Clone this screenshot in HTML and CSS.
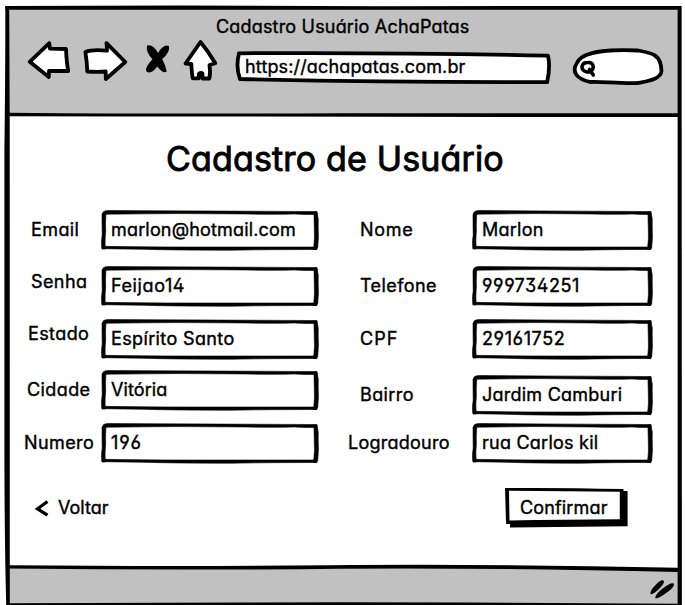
FILE: index.html
```html
<!DOCTYPE html>
<html lang="pt-BR">
<head>
<meta charset="utf-8">
<title>Cadastro Usuário AchaPatas</title>
<link rel="stylesheet" href="styles.css">
</head>
<body>
<svg class="defs" width="0" height="0" aria-hidden="true">
  <symbol id="box-wide" viewBox="0 0 218 42">
    <path d="M3 3L3 37Q110 40 214 38L215 4Q112 2 3 3Z" fill="#fff"/>
    <g class="edge">
      <path d="M2 2Q4 0 9 .5Q105 1 210 1.500L216 1.500L216 4.500Q207 4.700 193 4Q175 4.600 145 4Q75 3 2 4.300Z"/>
      <path d="M1 4Q3 .8 5 3Q4.300 13 4.700 21Q3.700 29 4.300 39L1 39Q-.2 33 1.200 25Q1 15 1 4Z"/>
      <path d="M1 36.300Q40 37 90 37L214 37L216 39.500Q170 39.500 130 40.200Q80 40.300 42 39.300L1 38.700Z"/>
      <path d="M213 2L216 2Q218 9 217.200 17Q218 27 216.700 38Q216 40.500 212.500 39.500Q214 28 213.300 18Q213 9 213 2Z"/>
    </g>
  </symbol>
  <symbol id="box-narrow" viewBox="0 0 181 42">
    <path d="M3 3L3 37Q90 40 177 38L178 4Q92 2 3 3Z" fill="#fff"/>
    <g class="edge">
      <path d="M2 2Q4 0 9 .5Q85 1 174 1.500L179 1.500L179 4.500Q172 4.700 160 4Q145 4.600 120 4Q62 3 2 4.300Z"/>
      <path d="M1 4Q3 .8 4.800 3Q4 13 4.400 21Q3.500 29 4.200 39L1 39Q-.2 33 1.200 25Q1 15 1 4Z"/>
      <path d="M1 36.300Q35 37 75 37L177 37L179 39.500Q140 39.500 108 40.200Q66 40.300 35 39.300L1 38.700Z"/>
      <path d="M176 2L179 2Q181 9 180.200 17Q181 27 179.700 38Q179 40.500 175.500 39.500Q177 28 176.300 18Q176 9 176 2Z"/>
    </g>
  </symbol>
</svg>

<main class="window">
  <svg class="frame" viewBox="0 0 685 605" aria-hidden="true">
    <path class="gray" d="M7 7H679V115H7ZM7 567Q180 570 340 568Q520 567 679 570V605H7Z"/>
    <path d="M5.500 6Q200 5 380 6.200L681 6V9.700H5.500Z"/>
    <path d="M8 112.700Q180 114.200 340 113.200H680V117Q300 116.800 8 116.200Z"/>
    <path d="M5.300 6L9.200 6Q9.400 60 9.700 115L9.800 605H6.200Q4.600 545 4.400 460L4.400 150Q5.500 60 5.300 6Z"/>
    <path d="M677.600 6H681.600L681.900 605H677.600Z"/>
    <path d="M9 565.200Q180 566.700 330 565.200Q480 563.500 678 567.800V572Q480 567.500 340 568.800Q180 570.500 9 568.600Z"/>
    <path d="M9 603.200L240 602.500Q430 601.800 678 603.800V605H9Z"/>
  </svg>

  <header class="browser">
    <div class="caption">Cadastro Usuário AchaPatas</div>
    <nav class="toolbar">
      <svg class="nav-icons" width="194" height="46" viewBox="25 37 194 46" aria-hidden="true">
        <g class="outlined">
          <path d="M49.300 43.200L29.700 61.800L48.800 77L49 71H68.200Q66.500 62 66 49L50 48.700Z"/>
          <path d="M106.500 43.200L125.300 62L105.800 79L105.700 71.500Q98 72.400 87.300 71.500Q87 62 85.400 52Q92 49.300 107 50.700Z"/>
          <path d="M200.500 42L185.500 63.500L191.300 64Q191.800 73 192.700 78.300H198.800V74Q199.500 72.800 200.800 72.800Q202.500 72.800 202.500 74V78.500H209.300Q210.700 73 209.500 65L215.300 63.300Q208 51 200.500 42Z"/>
        </g>
        <path d="M147 45.500Q153 43.500 158 53Q163.500 43.500 169 46Q170.500 52 162.200 59Q165.500 65 166.700 71.500Q163.500 74.500 157.200 66.500Q152 74 147 72Q143.500 69 152.500 59.300Q145.500 52 147 45.500Z"/>
      </svg>
      <div class="address">
        <svg viewBox="236 50 316 35" aria-hidden="true"><path class="ink" d="M239 53.300Q390 52.200 548 55.700Q550.500 66 547.200 82Q390 82.500 240 79Q235.500 67 239 53.300Z"/></svg>
        <span>https://achapatas.com.br</span>
      </div>
      <svg class="search" width="94" height="42" viewBox="572 46 94 42" aria-hidden="true">
        <path class="ink" d="M577 63C583 50 613 49.500 638 50.500C652 53 661 54 661.500 71C661 79 648 81 638 83C621 84 599 81 590 82C577 79 571 72 577 63Z"/>
        <path class="lens" d="M587.500 62.500Q593 62 593.300 67Q592.500 72.500 587 72Q581.600 70.500 582 66.500Q582.800 62.500 587.500 62.500ZM589.500 69.500L593.300 75"/>
      </svg>
    </nav>
  </header>

  <section class="page">
    <h1>Cadastro de Usuário</h1>
    <form class="form">
      <div class="column left">
        <div class="row"><label class="email">Email</label><div class="field"><svg><use href="#box-wide"/></svg><span class="v-email">marlon@hotmail.com</span></div></div>
        <div class="row r2"><label class="senha">Senha</label><div class="field"><svg><use href="#box-wide"/></svg><span class="v-senha">Feijao14</span></div></div>
        <div class="row r3"><label class="estado">Estado</label><div class="field"><svg><use href="#box-wide"/></svg><span class="v-estado">Espírito Santo</span></div></div>
        <div class="row r4"><label class="cidade">Cidade</label><div class="field"><svg><use href="#box-wide"/></svg><span class="v-cidade">Vitória</span></div></div>
        <div class="row r5"><label class="numero">Numero</label><div class="field"><svg><use href="#box-wide"/></svg><span class="v-numero">196</span></div></div>
      </div>
      <div class="column right">
        <div class="row"><label class="nome">Nome</label><div class="field"><svg><use href="#box-narrow"/></svg><span class="v-nome">Marlon</span></div></div>
        <div class="row r2"><label class="telefone">Telefone</label><div class="field"><svg><use href="#box-narrow"/></svg><span class="v-telefone">999734251</span></div></div>
        <div class="row r3"><label class="cpf">CPF</label><div class="field"><svg><use href="#box-narrow"/></svg><span class="v-cpf">29161752</span></div></div>
        <div class="row r4"><label class="bairro">Bairro</label><div class="field"><svg><use href="#box-narrow"/></svg><span class="v-bairro">Jardim Camburi</span></div></div>
        <div class="row r5"><label class="logradouro">Logradouro</label><div class="field"><svg><use href="#box-narrow"/></svg><span class="v-logradouro">rua Carlos kil</span></div></div>
      </div>
    </form>
    <div class="actions">
      <div class="back">
        <svg width="14" height="18" viewBox="35 499 14 18" aria-hidden="true"><path class="chevron" d="M47.500 501.500L37.500 508.800L47.500 515.200"/></svg>
        <span>Voltar</span>
      </div>
      <div class="confirm">
        <svg viewBox="505 488 124 41" aria-hidden="true">
          <path d="M511 492H627.600V527.300L510 528.500V525H506Z"/>
          <path d="M505 489Q560 488.500 623.500 490V523H506Z"/>
          <path d="M509 491.800L619.800 492.800V520.300Q560 520.500 509.500 521.500Z" fill="#fff"/>
        </svg>
        <span>Confirmar</span>
      </div>
    </div>
  </section>

  <footer class="status">
    <svg width="26" height="22" viewBox="649 578 26 22" aria-hidden="true">
      <path d="M650.500 594Q649.500 591 656 584.500Q661 579.500 663.500 580.500Q665.500 582.500 659 589Q653 595 650.500 594ZM655.500 598.500Q654.500 595 662 589Q671 582 674 583.700Q674.500 587 667.500 592Q659 598.500 655.500 598.500Z"/>
    </svg>
  </footer>
</main>
</body>
</html>
```

FILE: styles.css
```css
* { box-sizing: border-box; }
body {
  margin: 0;
  background: #fff;
  color: #000;
  font: 400 18px/24px Inter, "Open Sans", sans-serif;
  font-feature-settings: "cv11", "ss01";
  -webkit-text-stroke: .4px #000;
  white-space: nowrap;
}
.defs { position: absolute; }
svg { display: block; overflow: visible; }
.window {
  position: relative;
  width: 685px;
  height: 605px;
  overflow: hidden;
  display: flex;
  flex-direction: column;
}
.frame { position: absolute; inset: 0; z-index: -1; }
.gray { fill: #c1c1c1; }
.outlined path, .ink {
  fill: #fff;
  stroke: #000;
  stroke-width: 3.8;
  stroke-linejoin: round;
}
.edge { stroke: #000; stroke-width: .6; }
.lens { fill: #fff; stroke: #000; stroke-width: 3.6; stroke-linecap: round; }
.chevron { fill: none; stroke: #000; stroke-width: 3.2; }

.browser { height: 115px; padding-top: 15px; }
.caption { padding-left: 216px; letter-spacing: .18px; }
.toolbar { display: flex; align-items: flex-start; padding-left: 25px; }
.nav-icons { flex: none; margin-top: -2px; }
.address { position: relative; width: 316px; height: 35px; margin: 11px 20px 0 17px; padding: 5px 0 0 9px; letter-spacing: .15px; }
.address svg, .field svg, .confirm svg { position: absolute; inset: 0; width: 100%; height: 100%; z-index: -1; }
.search { margin-top: 7px; }

.page { height: 452px; display: flex; flex-direction: column; }
h1 { margin: 24px 0 0; padding-left: 166px; font-size: 34px; line-height: 40px; font-weight: 400; letter-spacing: .16px; -webkit-text-stroke-width: .9px; }
.form { display: flex; margin-top: 31px; }
.left { width: 348px; }
.row { display: flex; height: 42px; }
.r2 { margin-top: 14px; }
.r3 { margin-top: 11px; }
.left .r4 { margin-top: 9px; }
.left .r5 { margin-top: 11px; }
.right .r4 { margin-top: 14px; }
.right .r5 { margin-top: 6px; }
.row label { flex: none; padding-top: 8px; letter-spacing: .4px; }
.left label { width: 101px; padding-left: 31px; }
.right label { width: 124px; padding-left: 12px; }
.left .senha { padding-top: 4px; }
.left .estado { padding: 3px 0 0 28px; }
.left .cidade { padding: 8px 0 0 27px; }
.left .numero { padding-left: 24px; }
.right .nome { letter-spacing: .7px; }
.right .cpf { letter-spacing: 1px; }
.right .logradouro { padding-left: 0; letter-spacing: .25px; }
.field { position: relative; width: 218px; height: 42px; padding: 8px 0 0 10px; }
.right .field { width: 181px; }
.v-email { letter-spacing: .17px; }
.v-senha, .v-telefone, .v-cpf { letter-spacing: .6px; }
.v-estado { letter-spacing: .37px; }
.v-cidade { letter-spacing: .1px; }
.v-numero { letter-spacing: 1px; }
.v-nome, .v-bairro, .v-logradouro { letter-spacing: .24px; }

.actions { display: flex; justify-content: space-between; margin-top: 22px; padding: 0 56px 0 35px; }
.back { display: flex; align-items: center; gap: 9px; height: 41px; }
.back span { padding-top: 1px; }
.confirm { position: relative; width: 124px; height: 41px; padding: 9px 0 0 15px; letter-spacing: .15px; }

.status { height: 38px; display: flex; justify-content: flex-end; padding: 11px 10px 0 0; }
```
